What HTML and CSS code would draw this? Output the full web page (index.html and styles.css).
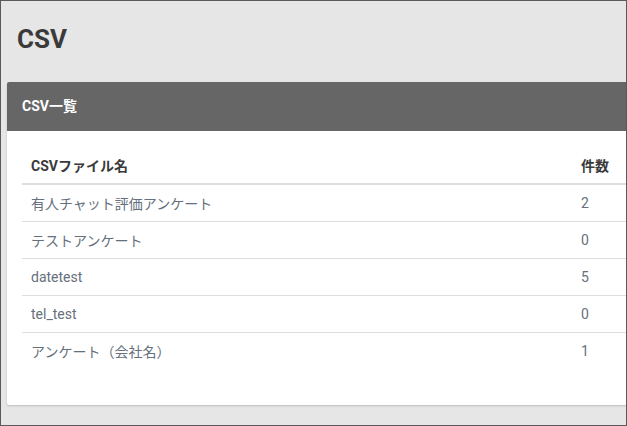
FILE: index.html
```html
<!DOCTYPE html>
<html lang="ja">
<head>
<meta charset="utf-8">
<link rel="stylesheet" href="styles.css">
</head>
<body>
<div class="frame">
  <h1 class="page-title">CSV</h1>
  <section class="card">
    <div class="card-header">CSV一覧</div>
    <div class="card-body">
      <table class="csv-table">
        <thead>
          <tr><th class="col-name">CSVファイル名</th><th class="col-count">件数</th></tr>
        </thead>
        <tbody>
          <tr><td>有人チャット評価アンケート</td><td>2</td></tr>
          <tr><td>テストアンケート</td><td>0</td></tr>
          <tr><td>datetest</td><td>5</td></tr>
          <tr><td>tel_test</td><td>0</td></tr>
          <tr><td>アンケート（会社名）</td><td>1</td></tr>
        </tbody>
      </table>
    </div>
  </section>
</div>
</body>
</html>
```
FILE: styles.css
```css
html, body {
  margin: 0;
  padding: 0;
}
body {
  font-family: Roboto, "Noto Sans CJK JP", sans-serif;
  background: #e6e6e6;
}
.frame {
  width: 627px;
  height: 426px;
  box-sizing: border-box;
  border: 1px solid #5a5a5a;
  background: #e6e6e6;
  overflow: hidden;
}
.page-title {
  margin: 0;
  padding: 0 0 0 16px;
  height: 80px;
  line-height: 76px;
  font-size: 26px;
  font-weight: 700;
  color: #3a3a3a;
}
.card {
  margin-left: 6px;
  margin-right: -30px;
  margin-top: 1px;
  background: #fff;
  border-radius: 2px;
  box-shadow: 0 1px 2px rgba(0,0,0,0.18);
}
.card-header {
  height: 49px;
  line-height: 49px;
  background: #666666;
  color: #fff;
  font-size: 14px;
  font-weight: 700;
  padding-left: 15px;
  border-radius: 2px 2px 0 0;
}
.card-body {
  padding: 16px 0 36px 15px;
}
.csv-table {
  border-collapse: collapse;
  width: 640px;
  font-size: 14px;
}
.csv-table th {
  text-align: left;
  height: 36px;
  padding: 0 9px;
  font-weight: 700;
  color: #3a3a3a;
  border-bottom: 2px solid #dddddd;
}
.csv-table th.col-name {
  width: 532px;
}
.csv-table td {
  height: 36px;
  padding: 0 9px;
  color: #66707c;
  border-top: 1px solid #dddddd;
}
.csv-table tbody tr:first-child td {
  border-top: none;
}
```
